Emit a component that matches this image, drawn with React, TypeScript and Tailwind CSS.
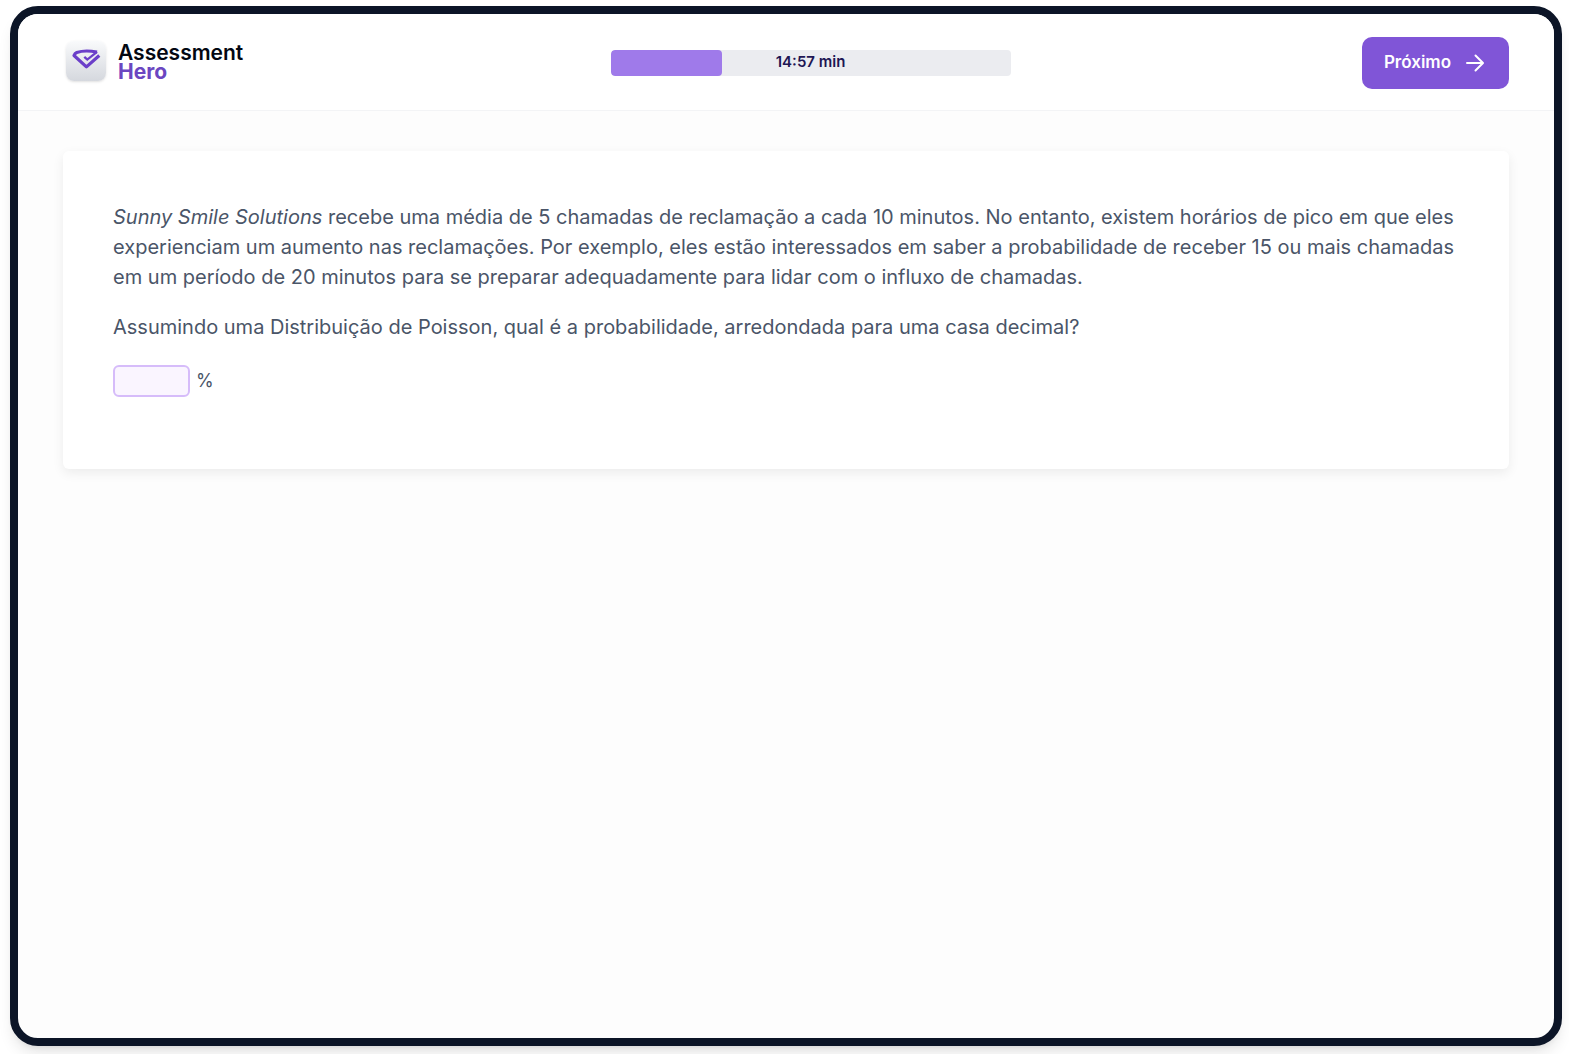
import { useState } from 'react';

const TOTAL_SECONDS = 1245;
const REMAINING_SECONDS = 897;

function formatTime(seconds: number) {
  const min = Math.floor(seconds / 60);
  const sec = String(seconds % 60).padStart(2, '0');
  return `${min}:${sec} min`;
}

function Logo() {
  return (
    <a href="#" className="flex items-start gap-3 pr-4 pb-1 pl-[3px]">
      <span className="flex h-10 w-10 justify-center rounded-lg bg-linear-to-b from-gray-50 to-[#d5d8de] pt-2 shadow-sm">
        <svg className="h-[22px] w-[30px]" viewBox="0 0 28 20" fill="none" stroke="#6b3fc9">
          <path d="M24.3 2.6C18 1.4 9.5 1.6 5.4 3C4.1 3.6 3.2 4.8 2.8 5.8L14.4 16.4L26.4 5.8" strokeWidth={3} strokeLinejoin="round" />
          <path d="M12.4 7L15.2 9.6L24.3 2.4" strokeWidth={2.2} />
        </svg>
      </span>
      <span className="flex flex-col pt-0.5 text-[21px] leading-[19px]">
        <span className="font-semibold text-gray-950">Assessment</span>
        <span className="font-bold text-[#6b46c1]">Hero</span>
      </span>
    </a>
  );
}

function TimerBar({ total, remaining }: { total: number; remaining: number }) {
  const elapsed = ((total - remaining) / total) * 100;

  return (
    <div
      role="progressbar"
      aria-label="Tempo"
      aria-valuenow={Math.round(elapsed)}
      className="relative flex h-[26px] w-[400px] items-center justify-center overflow-hidden rounded bg-[#ebecf0]"
    >
      <div className="absolute inset-y-0 left-0 rounded bg-[#9f7aea]" style={{ width: `${elapsed}%` }} />
      <span className="relative text-[15px] font-semibold text-[#1e1654]">{formatTime(remaining)}</span>
    </div>
  );
}

export default function App() {
  const [answer, setAnswer] = useState('');

  return (
    <div className="flex min-h-screen bg-white pt-1.5 pr-[7px] pb-2 pl-2.5 font-['Inter',sans-serif]">
      <div className="flex flex-1 flex-col overflow-hidden rounded-[28px] border-8 border-[#0c1527] bg-[#fdfdfd] shadow-lg">
        <header className="flex h-[97px] items-center justify-between border-b border-gray-100 bg-white px-[45px] pt-px">
          <Logo />
          <TimerBar total={TOTAL_SECONDS} remaining={REMAINING_SECONDS} />
          <button
            type="button"
            className="flex h-[52px] items-center gap-3 rounded-[10px] bg-[#8055d7] px-[22px] text-[17px] font-semibold text-white"
          >
            Próximo
            <svg className="h-6 w-6" viewBox="0 0 24 24" fill="none" stroke="currentColor" strokeWidth={2} strokeLinecap="round" strokeLinejoin="round">
              <path d="M4 12h15M12.5 4.5L20 12l-7.5 7.5" />
            </svg>
          </button>
        </header>

        <main className="flex-1 px-[45px] py-10">
          <section className="rounded-md bg-white px-[50px] pt-[51px] pb-[72px] text-xl leading-[30px] text-[#4a5568] shadow-[0_4px_12px_rgba(0,0,0,0.07)]">
            <p className="mb-5">
              <em>Sunny Smile Solutions</em> recebe uma média de 5 chamadas de reclamação a cada 10 minutos. No
              entanto, existem horários de pico em que eles experienciam um aumento nas reclamações. Por exemplo,
              eles estão interessados em saber a probabilidade de receber 15 ou mais chamadas em um período de 20
              minutos para se preparar adequadamente para lidar com o influxo de chamadas.
            </p>
            <p className="mb-[23px]">
              Assumindo uma Distribuição de Poisson, qual é a probabilidade, arredondada para uma casa decimal?
            </p>
            <label className="flex items-center gap-1.5 text-lg">
              <input
                type="text"
                inputMode="decimal"
                aria-label="Probabilidade"
                value={answer}
                onChange={(e) => setAnswer(e.target.value)}
                className="h-8 w-[77px] rounded-md border-2 border-[#d6bcfa] bg-[#faf5ff] px-2 outline-none"
              />
              %
            </label>
          </section>
        </main>
      </div>
    </div>
  );
}
